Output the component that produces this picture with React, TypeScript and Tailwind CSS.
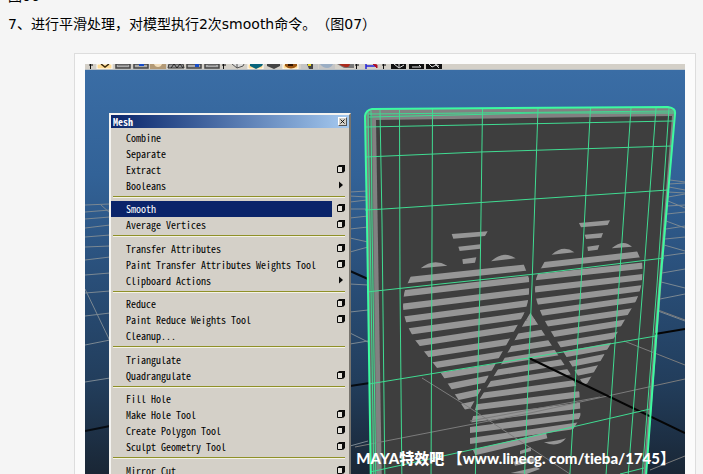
import { X } from 'lucide-react';

type Extra = 'box' | 'arrow' | null;

interface MenuEntry {
  label: string;
  extra: Extra;
}

const GROUPS: MenuEntry[][] = [
  [
    { label: 'Combine', extra: null },
    { label: 'Separate', extra: null },
    { label: 'Extract', extra: 'box' },
    { label: 'Booleans', extra: 'arrow' },
  ],
  [
    { label: 'Smooth', extra: 'box' },
    { label: 'Average Vertices', extra: 'box' },
  ],
  [
    { label: 'Transfer Attributes', extra: 'box' },
    { label: 'Paint Transfer Attributes Weights Tool', extra: 'box' },
    { label: 'Clipboard Actions', extra: 'arrow' },
  ],
  [
    { label: 'Reduce', extra: 'box' },
    { label: 'Paint Reduce Weights Tool', extra: 'box' },
    { label: 'Cleanup...', extra: null },
  ],
  [
    { label: 'Triangulate', extra: null },
    { label: 'Quadrangulate', extra: 'box' },
  ],
  [
    { label: 'Fill Hole', extra: null },
    { label: 'Make Hole Tool', extra: 'box' },
    { label: 'Create Polygon Tool', extra: 'box' },
    { label: 'Sculpt Geometry Tool', extra: 'box' },
  ],
  [{ label: 'Mirror Cut', extra: 'box' }],
];

// x1, y1, x2, y2 of every stripe, in the local units of its heart
const LEFT_STRIPES = [
  [42, 180, 390, 143], [27, 220, 402, 177], [25, 260, 402, 214], [30, 298, 397, 250],
  [45, 334, 383, 287], [65, 370, 360, 325], [92, 403, 338, 366], [120, 435, 312, 405],
  [145, 466, 285, 443], [170, 498, 262, 480], [192, 530, 240, 520], [204, 560, 228, 555],
];

const RIGHT_STRIPES = [
  [35, 151, 328, 118], [20, 186, 338, 152], [16, 223, 338, 186], [20, 260, 331, 220],
  [32, 294, 318, 253], [50, 326, 298, 290], [72, 357, 272, 325], [90, 388, 250, 362],
  [108, 417, 225, 396], [125, 446, 205, 430], [142, 473, 190, 463], [156, 500, 174, 496],
];

const LOWER_STRIPES = [
  [190, 56, 232, 50], [172, 95, 255, 82], [155, 132, 275, 113], [130, 168, 295, 142],
  [110, 203, 310, 171], [85, 238, 330, 200], [68, 272, 345, 234], [48, 307, 358, 268],
  [35, 343, 360, 302], [30, 375, 358, 333], [30, 408, 345, 363], [44, 442, 240, 396],
];

function Stripes({ rows, width }: { rows: number[][]; width: number }) {
  return (
    <g stroke="#969696" strokeWidth={width}>
      {rows.map(([x1, y1, x2, y2]) => {
        const slope = (y2 - y1) / (x2 - x1);
        return <line key={y1} x1={x1 - 20} y1={y1 - 20 * slope} x2={x2 + 20} y2={y2 + 20 * slope} />;
      })}
    </g>
  );
}

function Toolbar() {
  return (
    <svg viewBox="0 0 600 6" className="block w-full bg-[#d4d0c8]" aria-hidden="true">
      <path d="M5.500 0v6M138.500 0v6M271.500 0v6M298.500 0v6" stroke="#111" strokeWidth="1" />
      <path d="M4 1h4M137 1h4M270 1h4M297 1h4" stroke="#111" strokeWidth="1" />
      <path d="M12 0h15v5h-15z M163 0h15v5h-15z M198 0h15v5h-15z" fill="#ffdc96" stroke="#fff" />
      <path d="M16 0l4 3l4 -3" fill="none" stroke="#3c2c10" strokeWidth="1.500" />
      <path d="M31 0h14v4h-14z M49 0h14v4h-14z M102 0h14v4h-14z M120 0h14v4h-14z" fill="#aaa" stroke="#444" strokeWidth="1.500" />
      <path d="M33 1h10M123 1h8" stroke="#666" />
      <path d="M54 0h5v2h-5z M110 0h4v3h-4z" fill="#164cc8" />
      <path d="M65 0h16v5h-16z" fill="#b39a76" />
      <path d="M69 0h8q-1 3 -4 3t-4 -3z" fill="#f3dfbd" />
      <path d="M84 0h14l1 4h-16z" fill="#999" stroke="#333" />
      <path d="M86 4l3 -4l3 4l3 -4l3 4" fill="none" stroke="#222" />
      <path d="M147 0l5 4l6 -2l1 -2M152 0v4" fill="#ddd" stroke="#555" />
      <path d="M165 0h13l-1 2l-6 3l-6 -3z" fill="#08637b" />
      <path d="M182 0h13v2l-6 3l-7 -3z" fill="#444" />
      <path d="M200 0h12v2q-6 5 -12 0z" fill="#9b5614" />
      <path d="M203 0h5v2h-5z" fill="#321500" />
      <path d="M216 0h17v5h-17z M234 0h16v5h-16z" fill="#c5c5c5" />
      <path d="M222 0h6v5h-4z" fill="#444" />
      <path d="M223 0h3v2h-3z" fill="#e8d626" />
      <path d="M235 0h13q-2 4 -6 4t-7 -4z" fill="#9baec4" />
      <path d="M252 0h17v4h-10z" fill="#777" />
      <path d="M254 0h11q-1 4 -5 3t-6 -3z" fill="#ab2a1d" />
      <path d="M281 0v5M281 2h9" stroke="#2525d8" strokeWidth="1.500" fill="none" />
      <path d="M288 0l4 4v-3z" fill="#b01028" stroke="#b01028" />
      <path d="M306 0h15v5h-15z M324 0h15v5h-15z M341 0h16v5h-16z" fill="#111" />
      <path d="M309 0l5 4l5 -3M314 0v3M327 3h9M334 1l2 2M344 0l3 3l4 -2l3 3M350 0l4 2" fill="none" stroke="#ddd" />
      <path d="M0 5.500h600" stroke="#b8bfc4" />
    </svg>
  );
}

function Scene() {
  return (
    <svg viewBox="85 70 600 420" className="block w-full" role="img" aria-label="Striped hearts on a panel in the perspective view">
      <defs>
        <linearGradient id="sky" x1="0" y1="70" x2="0" y2="490" gradientUnits="userSpaceOnUse">
          <stop offset="0" stopColor="#3a6da5" />
          <stop offset="0.250" stopColor="#326297" />
          <stop offset="0.500" stopColor="#294e78" />
          <stop offset="0.750" stopColor="#223d5b" />
          <stop offset="1" stopColor="#18222e" />
        </linearGradient>
        <clipPath id="leftHeart">
          <path d="M38 190L50 163L385 130L402 175Q407 240 385 285L222 572H212L135 455L60 360Q24 300 24 260Q24 215 38 190z" />
        </clipPath>
        <clipPath id="rightHeart">
          <path d="M33 160L45 138L320 106L337 145Q342 210 318 258L165 517L60 345Q15 270 15 222Q15 185 33 160z" />
        </clipPath>
        <clipPath id="lowerHeart">
          <path d="M210 22L330 205L358 262L362 330Q355 350 340 372L240 410L48 456L30 415V365L50 297L125 175z" />
        </clipPath>
      </defs>
      <rect x="85" y="70" width="600" height="420" fill="url(#sky)" />

      {/* ground grid */}
      <g fill="none" stroke="#7b8892" strokeWidth="1">
        <path d="M85 205l25 -1M85 212l25 -2M85 219l25 -2M85 228l25 -3M85 237l25 -2M85 247l25 -1M85 260l25 -3M85 275l25 -2M85 293l25 -2M85 316l25 -3M85 345l25 -5M85 382l25 -4" />
        <path d="M85 289l25 52M101 205l9 8" />
        <path d="M350 192l17 -1M350 196l17 1M350 202l17 -2M350 209l18 0M350 218l18 -2M350 229l18 -2M350 238l18 4M350 252l18 -5M350 284l18 1M350 312l18 -2M350 333l18 9M350 344l18 -3M350 446l18 -5" />
        <path d="M670 180l15 2M669 184l16 -1M669 187l16 3M668 192l17 1M668 197l17 -3M668 201l17 7M667 206l18 -1M667 214l18 -2M666 221l19 7M666 229l19 -3M665 239l20 -2M664 245l21 6M664 256l21 -3M662 273l23 -4M661 282l24 6M660 299l25 -5M658 311l27 10" />
      </g>
      <path d="M350 271l18 8M85 431l25 -5M350 386l20 -3" stroke="#070c12" strokeWidth="2" />

      {/* slab */}
      <path d="M365 116Q365 110 371 109L669 107Q676 108 675 115L645 490H371z" fill="#818181" />
      <path d="M369 114L371 490H377L372 116z" fill="#5e6863" />
      <path d="M376 120L672 116L642 490H382z" fill="#3e3e3e" />

      {/* left heart */}
      <g transform="translate(395 220) scale(0.333333)">
        <g clipPath="url(#leftHeart)">
          <Stripes rows={LEFT_STRIPES} width={19} />
        </g>
        <path
          d="M170 42L278 34L270 48L175 56z M190 80L256 73V86L194 93z M202 118L244 112L240 128L204 132z M77 145Q115 113 157 137z M288 124Q325 90 362 115z"
          fill="#969696"
        />
      </g>

      {/* right heart */}
      <g transform="translate(530 215) scale(0.333333)">
        <g clipPath="url(#rightHeart)">
          <Stripes rows={RIGHT_STRIPES} width={18} />
        </g>
        <path
          d="M147 24L240 16L233 30L153 37z M164 59L219 54L214 68L168 72z M172 95L208 90L203 104L174 108z M65 119Q100 88 133 112z M245 100Q280 70 306 95z"
          fill="#969696"
        />
      </g>

      {/* lower heart */}
      <g transform="translate(460 305) scale(0.333333)">
        <g clipPath="url(#lowerHeart)">
          <Stripes rows={LOWER_STRIPES} width={18} />
          <path d="M212 22L198 45H228z" fill="#969696" />
        </g>
        <path d="M252 412Q295 408 318 400Q295 430 252 412z M180 438L213 426V438L180 448z M160 470L225 458V470L165 482z M152 504L230 486L240 492L200 507z" fill="#969696" />
      </g>

      <g fill="none" stroke="#7c7c7c" strokeWidth="1">
        <path d="M355 447L530 413L685 379M470 421L600 397M422 378L470 408L570 474M624 341L685 365M650 470L685 456M658 310L685 320" />
      </g>
      <path d="M529 358L685 433M655 334L685 329" stroke="#050505" strokeWidth="2" />

      {/* wireframe */}
      <g fill="none" stroke="#40dc92" strokeWidth="1">
        <path d="M380 110L382 222L385 490M399.500 110L400 285L402 490M432.500 108L431 490M482.500 108L480 285L475 490M538 108L532 285L529 358L524 490M590.500 108L581 285L569 490M631 108L619 285L605 490M656 108L643 285L627 490M669 108L657 285L641 490" />
        <path d="M365 127L673 121M365 157L480 152L672 146M365 210L384 209L668 190M367 292L431 285L535 274L664 258M369 384L528 358L656 336M370 472L525 438L650 409M620 474L644 468" />
        <path d="M368 112L370 222L374 490M371 111L372 222L376 490M368 114L674 111M369 117L540 113L674 113" />
      </g>
      <path d="M371 490L367 222L365 116Q366 110 372 109L668 107Q676 108 675 114L660 285L645 490" fill="none" stroke="#3dfba0" strokeWidth="2" />
    </svg>
  );
}

function BoxIcon() {
  return (
    <svg viewBox="0 0 8 8" className="block size-2" aria-hidden="true">
      <path d="M2 0H8V6L6 8V2H0z" fill="#0a0a0a" />
      <path d="M0.500 1.500H5.500V7.500H0.500z" fill="#e4e1da" stroke="#0a0a0a" />
    </svg>
  );
}

function MenuRow({ label, extra }: MenuEntry) {
  const active = label === 'Smooth';
  return (
    <li className="flex h-4 items-center">
      <button
        type="button"
        className={`h-4 flex-1 pl-[15px] text-left ${active ? 'bg-[#0a246a] text-white' : 'text-black'}`}
      >
        {label}
      </button>
      <span className="flex w-[17px] justify-end pr-1 pb-[3px]">
        {extra === 'box' && (
          <button type="button" aria-label={`${label} options`}>
            <BoxIcon />
          </button>
        )}
        {extra === 'arrow' && (
          <svg viewBox="0 0 8 8" className="block size-2" aria-hidden="true">
            <path d="M2 0.500L6 4L2 7.500z" fill="#0a0a0a" />
          </svg>
        )}
      </span>
    </li>
  );
}

function MeshMenu() {
  return (
    <section
      aria-label="Mesh"
      className="absolute top-[49px] left-6 w-[242px] border-2 border-t-[#f4f3f0] border-l-[#f4f3f0] border-r-[#77746e] border-b-[#77746e] bg-[#d4d0c8] font-['Noto_Sans_CJK_SC',monospace] text-[10px] leading-4 [font-feature-settings:'hwid']"
    >
      <header className="flex h-[13px] items-center justify-between bg-linear-to-r from-[#0a246a] to-[#a6caf0] pr-0.5 pl-0.5 text-white">
        <h2 className="font-bold">Mesh</h2>
        <button
          type="button"
          aria-label="Close"
          className="flex size-[9px] items-center justify-center border border-t-white border-l-white border-r-[#555] border-b-[#555] bg-[#d4d0c8] text-black"
        >
          <X className="size-[7px]" strokeWidth={3} />
        </button>
      </header>
      <div className="pt-0.5">
        {GROUPS.map((group) => (
          <ul
            key={group[0].label}
            className="not-last:after:mr-1 not-last:after:ml-0.5 not-last:after:mt-0.5 not-last:after:mb-[3px] not-last:after:block not-last:after:h-0.5 not-last:after:border-t not-last:after:border-b not-last:after:border-t-[#8f9028] not-last:after:border-b-[#f4f3e4] even:pb-px"
          >
            {group.map((item) => (
              <MenuRow key={item.label} {...item} />
            ))}
          </ul>
        ))}
      </div>
    </section>
  );
}

export default function App() {
  return (
    <main className="h-screen overflow-hidden bg-[#f5f5f5] font-['DejaVu_Sans','Noto_Sans_CJK_SC',sans-serif] text-sm text-black">
      <article className="-mt-[18px] pr-[7px] pl-2 [text-spacing-trim:space-all]">
        <p className="leading-7">图06</p>
        <p className="leading-7">7、进行平滑处理，对模型执行2次smooth命令。（图07）</p>
        <figure className="mt-[15px] ml-[66px] border border-[#dddddd] bg-[#fbfbfb] p-2.5">
          <div className="relative overflow-hidden">
            <Toolbar />
            <Scene />
            <MeshMenu />
            <p className="absolute top-[382px] right-2.5 font-['Lato','Noto_Sans_CJK_SC',sans-serif] text-[15px] leading-6 font-black whitespace-pre text-white [font-variant-ligatures:none]">
              MAYA特效吧 【www.linecg. com/tieba/1745】
            </p>
          </div>
        </figure>
      </article>
    </main>
  );
}
